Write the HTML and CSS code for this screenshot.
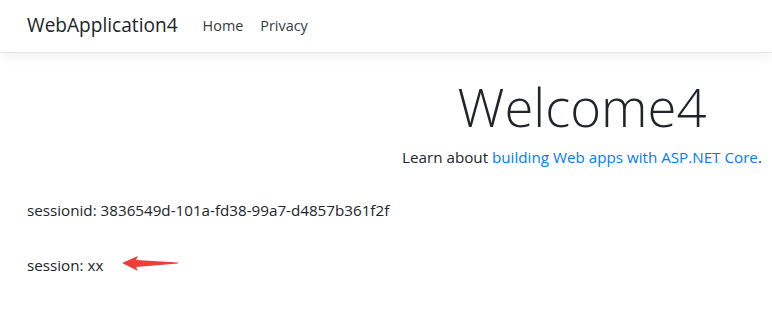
FILE: index.html
```html
<!DOCTYPE html>
<html lang="en">
<head>
  <meta charset="UTF-8" />
  <meta name="viewport" content="width=device-width, initial-scale=1" />
  <title>Home Page - WebApplication4</title>
  <link rel="stylesheet" href="styles.css">
</head>
<body>
  <header>
    <nav class="navbar">
      <div class="container navbar-inner">
        <a class="brand" href="#">WebApplication4</a>
        <ul class="nav-links">
          <li><a href="#">Home</a></li>
          <li><a href="#">Privacy</a></li>
        </ul>
      </div>
    </nav>
  </header>

  <div class="container">
    <main class="main">
      <div class="text-center">
        <h1 class="display">Welcome4</h1>
        <p>Learn about <a href="#">building Web apps with ASP.NET Core</a>.</p>
      </div>

      <p class="session-line">sessionid: 3836549d-101a-fd38-99a7-d4857b361f2f</p>
      <!-- red annotation arrow pointing at the value -->
      <p class="session-line">session: xx<svg class="arrow" width="57" height="17" viewBox="0 0 57 17"><path d="M0 8 L16 1 L14 5 L56 7.5 L56 8.5 L14 12 L16 16 Z" fill="#f23c3c" /></svg></p>
    </main>
  </div>
</body>
</html>
```

FILE: styles.css
```css
body {
  margin: 0;
  font-family: "Open Sans", "Noto Sans", sans-serif;
  font-size: 15.2px;
  color: #212529;
  background: #fff;
  overflow: hidden;
}

a {
  color: #007bff;
  text-decoration: none;
}

.container {
  width: 1110px;
  padding: 0 15px;
  margin-left: 12px;
}

.navbar {
  height: 52px;
  background: #fff;
  border-bottom: 1px solid #e3e4e8;
  box-shadow: 0 4px 12px rgba(0, 0, 0, 0.05);
}

.navbar-inner {
  display: flex;
  align-items: center;
  height: 100%;
}

.brand {
  font-size: 19.1px;
  color: #212529;
  margin-right: 25px;
  margin-top: -2px;
}

.nav-links {
  display: flex;
  gap: 17px;
  list-style: none;
  margin: -2px 0 0;
  padding: 0;
}

.nav-links a {
  color: #343a40;
  font-size: 14.4px;
}

.main {
  padding-top: 22px;
}

.text-center {
  text-align: center;
}

.display {
  font-size: 52.6px;
  font-weight: 300;
  line-height: 1.2;
  margin: 0 0 9px;
}

.text-center p {
  margin: 0 0 31px;
}

.session-line {
  margin: 0 0 31px;
  line-height: 24px;
}

.arrow {
  vertical-align: -1px;
  margin-left: 19px;
}
```
